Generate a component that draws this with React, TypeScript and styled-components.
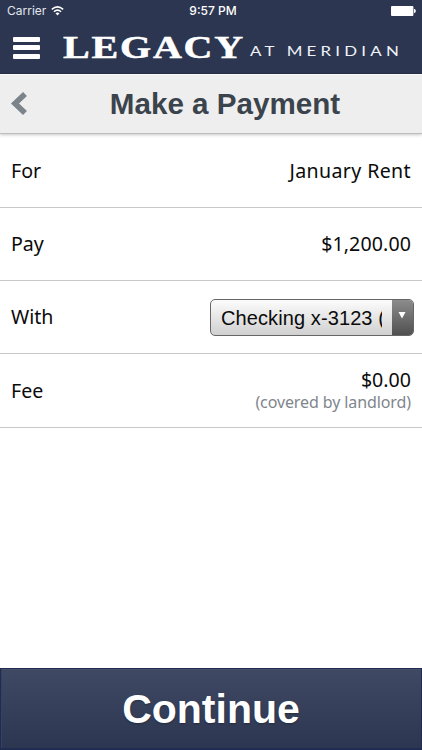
import React from "react";
import styled, { createGlobalStyle } from "styled-components";

const GlobalStyle = createGlobalStyle`
  *, *::before, *::after { box-sizing: border-box; }
  body { margin: 0; background: #fff; }
`;

const Screen = styled.div`
  width: 100%;
  height: 750px;
  display: flex;
  flex-direction: column;
  overflow: hidden;
  background: #fff;
  color: #0b0b0b;
  font-family: "Noto Sans", sans-serif;
`;

const AppHeader = styled.header`
  height: 74px;
  flex: none;
  background: #2c3650;
  border-bottom: 1px solid #252d48;
  color: #fff;
`;

const StatusBar = styled.div`
  height: 22px;
  display: grid;
  grid-template-columns: 1fr auto 1fr;
  align-items: center;
  padding: 0 6px 0 7px;
  font: 400 12px/22px Inter, sans-serif;
`;

const Carrier = styled.div`
  display: flex;
  align-items: center;
  gap: 5px;
  color: #e3e6ee;
`;

const Clock = styled.div`
  padding-left: 3px;
  font-weight: 500;
  font-size: 12px;
`;

const BatterySlot = styled.div`
  display: flex;
  justify-content: flex-end;
`;

const BrandBar = styled.div`
  height: 51px;
  display: flex;
  align-items: center;
`;

const MenuButton = styled.button`
  width: 27px;
  height: 22px;
  margin: 0 23px 0 13px;
  padding: 0;
  border: 0;
  background: none;
  display: flex;
  flex-direction: column;
  justify-content: space-between;
`;

const MenuBar = styled.span`
  width: 27px;
  height: 5px;
  border-radius: 1px;
  background: #fff;
`;

const TitleBar = styled.div`
  height: 60px;
  flex: none;
  display: grid;
  grid-template-columns: 40px 1fr 40px;
  align-items: center;
  background: #eee;
  border-top: 1px solid #fafafa;
  border-bottom: 1px solid #bdbdbd;
  box-shadow: 0 1px 3px rgba(0, 0, 0, 0.22);
`;

const BackButton = styled.button`
  padding: 0 0 0 10px;
  border: 0;
  background: none;
  display: flex;
`;

const Title = styled.h1`
  margin: 0;
  padding-left: 28px;
  text-align: center;
  color: #3b434c;
  font: 700 29.6px/58px "Liberation Sans", sans-serif;
  white-space: nowrap;
`;

const Details = styled.dl`
  flex: 1;
  margin: 0;
`;

const Row = styled.div<{ $height?: number }>`
  height: ${(p) => p.$height ?? 73.4}px;
  display: flex;
  align-items: center;
  justify-content: space-between;
  padding: 0 11px;
  border-bottom: 1px solid #c9c9c9;
`;

const Label = styled.dt`
  font-size: 19.6px;
  line-height: 24px;
`;

const Value = styled.dd<{ $spacing?: number }>`
  margin: 0;
  font-size: 19.6px;
  line-height: 24px;
  letter-spacing: ${(p) => p.$spacing ?? 0}px;
  text-align: right;
`;

const Note = styled.div`
  padding-bottom: 2px;
  color: #80868d;
  font-size: 16px;
  line-height: 20px;
  letter-spacing: -0.1px;
`;

const Select = styled.button`
  width: 204px;
  height: 37px;
  margin: 0 -3px 0 0;
  padding: 0;
  display: flex;
  border: 1px solid #666;
  border-radius: 5px;
  overflow: hidden;
  background: linear-gradient(#fcfcfc, #d0d0d0);
  color: #0b0b0b;
  font: 400 20px/36px "Liberation Sans", sans-serif;
  text-align: left;
`;

const SelectText = styled.span`
  width: 161px;
  margin: 0 10px;
  overflow: hidden;
  white-space: nowrap;
  letter-spacing: 0.1px;
`;

const SelectArrow = styled.span`
  flex: none;
  width: 21px;
  height: 35px;
  display: flex;
  align-items: center;
  justify-content: center;
  padding: 0 2px 4px 0;
  background: linear-gradient(#8c8c8c, #505050);
`;

const ContinueButton = styled.button`
  flex: none;
  height: 82px;
  padding: 0;
  border: 1px solid #202b51;
  border-bottom-width: 2px;
  background: linear-gradient(#3f4963, #2c3650);
  box-shadow: inset 0 1px 0 #465069, inset 1px 0 0 #354062;
  color: #fff;
  font: 700 41px/80px "Liberation Sans", sans-serif;
  text-shadow: 0 1px 2px rgba(0, 0, 0, 0.3);
`;

function WifiIcon() {
  return (
    <svg width="13" height="10" viewBox="0 0 13 10" fill="none" stroke="#fff" strokeWidth="1.5">
      <path d="M.8 3.4Q6.5-1.6 12.2 3.4M2.9 5.7Q6.5 2.6 10.1 5.7" />
      <path d="M4.5 7.3Q6.5 5.7 8.5 7.3L6.5 9.4Z" fill="#fff" stroke="none" />
    </svg>
  );
}

function BatteryIcon() {
  return (
    <svg width="25" height="10" viewBox="0 0 25 10" fill="#fff">
      <rect width="22.4" height="10" rx="1" />
      <path d="M23 3h.6q1.2.4 1.2 2t-1.2 2H23z" />
    </svg>
  );
}

function BrandLogo() {
  return (
    <svg width="340" height="40" viewBox="0 -5 340 40" fill="#fff">
      <text x="0" y="25" fontFamily="Liberation Serif" fontWeight="700" fontSize="31.3" letterSpacing="1.4" textLength="182" lengthAdjust="spacingAndGlyphs" stroke="#fff" strokeWidth=".5">LEGACY</text>
      <g transform="translate(187 22.8) scale(1.3 1)">
        <text fontFamily="Lato" fontSize="13" fill="#f0f3fa" textLength="114.5" lengthAdjust="spacing">AT MERIDIAN</text>
      </g>
    </svg>
  );
}

export default function App() {
  return (
    <Screen>
      <GlobalStyle />
      <AppHeader>
        <StatusBar>
          <Carrier>Carrier <WifiIcon /></Carrier>
          <Clock>9:57 PM</Clock>
          <BatterySlot><BatteryIcon /></BatterySlot>
        </StatusBar>
        <BrandBar>
          <MenuButton aria-label="Menu"><MenuBar /><MenuBar /><MenuBar /></MenuButton>
          <BrandLogo />
        </BrandBar>
      </AppHeader>
      <TitleBar>
        <BackButton aria-label="Back">
          <svg width="18" height="26" viewBox="0 0 18 26" fill="none" stroke="#7b838b" strokeWidth="5.6">
            <path d="M15 3L5 12.5L15 22" />
          </svg>
        </BackButton>
        <Title>Make a Payment</Title>
      </TitleBar>
      <Details>
        <Row $height={74}><Label>For</Label><Value $spacing={0.36}>January Rent</Value></Row>
        <Row $height={73}><Label>Pay</Label><Value $spacing={0.1}>$1,200.00</Value></Row>
        <Row>
          <Label>With</Label>
          <Select>
            <SelectText>Checking x-3123 (</SelectText>
            <SelectArrow>
              <svg width="8" height="7" viewBox="0 0 8 7" fill="#fff"><path d="M.5 0h7L4 6.5z" /></svg>
            </SelectArrow>
          </Select>
        </Row>
        <Row>
          <Label>Fee</Label>
          <Value>$0.00<Note>(covered by landlord)</Note></Value>
        </Row>
      </Details>
      <ContinueButton>Continue</ContinueButton>
    </Screen>
  );
}
